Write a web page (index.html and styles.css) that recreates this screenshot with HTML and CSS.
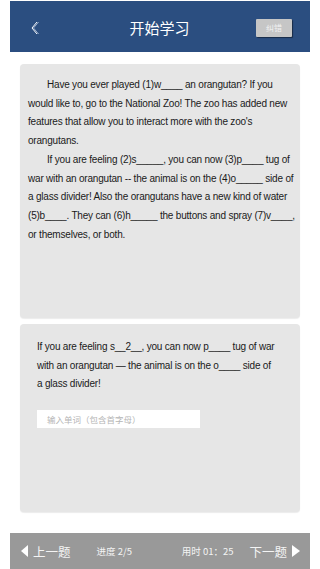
FILE: index.html
```html
<!DOCTYPE html>
<html lang="zh">
<head>
<meta charset="utf-8">
<link rel="stylesheet" href="styles.css">
</head>
<body>
<div class="app">
  <header class="topbar">
    <span class="back">
      <svg width="12" height="16" viewBox="0 0 12 16"><polyline points="8,2 3,8 8,14" fill="none" stroke="#ffffff" stroke-width="1"/><polyline points="9.5,2 4.5,8 9.5,14" fill="none" stroke="#9fb3cf" stroke-width="1"/></svg>
    </span>
    <h1 class="title">开始学习</h1>
    <span class="fix-btn">纠错</span>
  </header>
  <main class="content">
    <section class="card passage">
      <p class="indent">Have you ever played (1)w____ an orangutan? If you would like to, go to the National Zoo! The zoo has added new features that allow you to interact more with the zoo's orangutans.</p>
      <p class="indent">If you are feeling (2)s_____, you can now (3)p____ tug of war with an orangutan -- the animal is on the (4)o_____ side of a glass divider! Also the orangutans have a new kind of water (5)b____. They can (6)h_____ the buttons and spray (7)v____, or themselves, or both.</p>
    </section>
    <section class="card question">
      <p class="qtext">If you are feeling s__2__, you can now p____ tug of war with an orangutan — the animal is on the o____ side of a glass divider!</p>
      <div class="answer">输入单词（包含首字母）</div>
    </section>
  </main>
  <footer class="bottombar">
    <span class="nav prev"><span class="tri tri-left"></span>上一题</span>
    <span class="info progress">进度 2/5</span>
    <span class="info timer">用时 01：25</span>
    <span class="nav next">下一题<span class="tri tri-right"></span></span>
  </footer>
</div>
</body>
</html>
```
FILE: styles.css
```css
html, body {
  margin: 0;
  padding: 0;
  background: #ffffff;
}
.app {
  width: 320px;
  height: 569px;
  padding: 0 10px;
  box-sizing: border-box;
  display: flex;
  flex-direction: column;
  font-family: "Liberation Sans", Arial, "Noto Sans CJK SC", sans-serif;
}
.topbar {
  margin-top: 1px;
  height: 51px;
  background: #2b4e80;
  display: flex;
  align-items: center;
  padding: 0 18px 0 19px;
}
.back {
  display: flex;
  width: 12px;
  height: 16px;
  margin-top: 2px;
}
.title {
  flex: 1;
  margin: 0;
  text-align: center;
  font-family: "Noto Sans CJK SC", sans-serif;
  font-weight: normal;
  font-size: 15px;
  color: #ffffff;
  margin-top: 2px;
  padding-left: 22px;
}
.fix-btn {
  width: 36px;
  height: 18px;
  margin-top: 3px;
  background: #c6c6c6;
  box-shadow: 1px 1px 1px rgba(0,0,0,0.45);
  border-radius: 1px;
  color: #f2f2f2;
  font-family: "Noto Sans CJK SC", sans-serif;
  font-size: 8px;
  line-height: 18px;
  text-align: center;
}
.content {
  padding: 12px 10px 21px;
  display: flex;
  flex-direction: column;
  gap: 6px;
}
.card {
  background: #e6e6e6;
  border-radius: 4px;
  box-shadow: 0 1px 1px rgba(0,0,0,0.08);
  box-sizing: border-box;
}
.passage {
  height: 254px;
  padding: 12px 5px 0 8px;
}
.passage p {
  margin: 0;
  font-size: 10px;
  letter-spacing: -0.2px;
  line-height: 18.7px;
  color: #1a1a1a;
}
.indent {
  text-indent: 19px;
}
.question {
  height: 188px;
  padding: 14px 22px 0 17px;
}
.qtext {
  margin: 0;
  font-size: 10px;
  letter-spacing: -0.2px;
  line-height: 18.6px;
  color: #1a1a1a;
}
.answer {
  margin-top: 16px;
  width: 163px;
  height: 18px;
  background: #ffffff;
  box-sizing: border-box;
  padding-left: 10px;
  font-family: "Noto Sans CJK SC", sans-serif;
  font-size: 8.5px;
  line-height: 18px;
  color: #b5b5b5;
}
.bottombar {
  height: 36px;
  background: #999999;
  display: flex;
  align-items: center;
  padding: 0 10px 0 11px;
  color: #f4f4f4;
  font-family: "Noto Sans CJK SC", sans-serif;
}
.nav {
  display: flex;
  align-items: center;
  font-size: 12.5px;
  gap: 5px;
}
.tri {
  width: 0;
  height: 0;
  border-top: 6px solid transparent;
  border-bottom: 6px solid transparent;
}
.tri-left {
  border-right: 7px solid #ffffff;
}
.tri-right {
  border-left: 8px solid #ffffff;
}
.info {
  font-size: 9.5px;
}
.progress {
  margin-left: 26px;
}
.timer {
  margin-left: auto;
  margin-right: 16px;
}
```
